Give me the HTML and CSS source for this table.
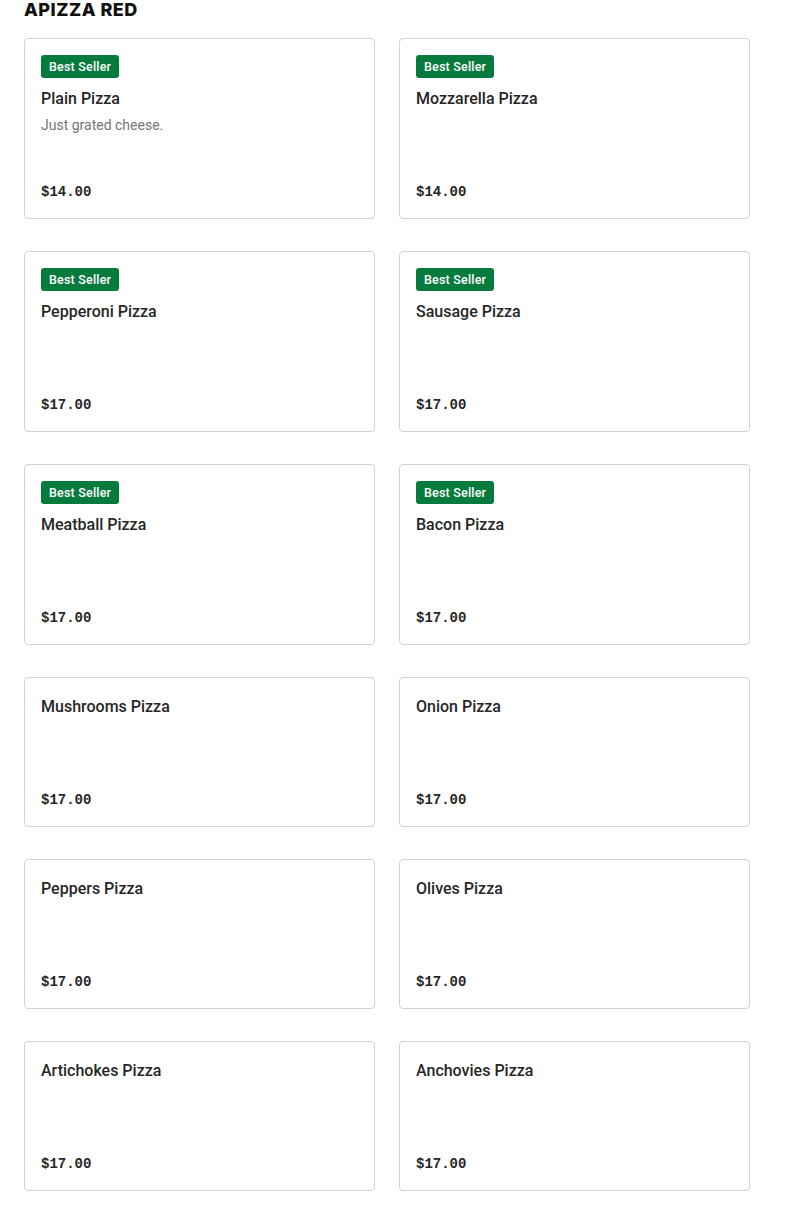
FILE: index.html
```html
<!DOCTYPE html>
<html>
<head>
<meta charset="utf-8">
<link rel="stylesheet" href="styles.css">
</head>
<body>
<main class="menu">
  <h2 class="section-title">APIZZA RED</h2>
  <div class="grid">
    <div class="card">
      <span class="badge">Best Seller</span>
      <div class="info">
        <div class="name">Plain Pizza</div>
        <div class="desc">Just grated cheese.</div>
      </div>
      <div class="price">$14.00</div>
    </div>
    <div class="card">
      <span class="badge">Best Seller</span>
      <div class="info"><div class="name">Mozzarella Pizza</div></div>
      <div class="price">$14.00</div>
    </div>
    <div class="card">
      <span class="badge">Best Seller</span>
      <div class="info"><div class="name">Pepperoni Pizza</div></div>
      <div class="price">$17.00</div>
    </div>
    <div class="card">
      <span class="badge">Best Seller</span>
      <div class="info"><div class="name">Sausage Pizza</div></div>
      <div class="price">$17.00</div>
    </div>
    <div class="card">
      <span class="badge">Best Seller</span>
      <div class="info"><div class="name">Meatball Pizza</div></div>
      <div class="price">$17.00</div>
    </div>
    <div class="card">
      <span class="badge">Best Seller</span>
      <div class="info"><div class="name">Bacon Pizza</div></div>
      <div class="price">$17.00</div>
    </div>
    <div class="card">
      <div class="info"><div class="name">Mushrooms Pizza</div></div>
      <div class="price">$17.00</div>
    </div>
    <div class="card">
      <div class="info"><div class="name">Onion Pizza</div></div>
      <div class="price">$17.00</div>
    </div>
    <div class="card">
      <div class="info"><div class="name">Peppers Pizza</div></div>
      <div class="price">$17.00</div>
    </div>
    <div class="card">
      <div class="info"><div class="name">Olives Pizza</div></div>
      <div class="price">$17.00</div>
    </div>
    <div class="card">
      <div class="info"><div class="name">Artichokes Pizza</div></div>
      <div class="price">$17.00</div>
    </div>
    <div class="card">
      <div class="info"><div class="name">Anchovies Pizza</div></div>
      <div class="price">$17.00</div>
    </div>
  </div>
</main>
</body>
</html>
```
FILE: styles.css
```css
html, body {
  margin: 0;
  padding: 0;
  background: #ffffff;
}
body {
  font-family: "Roboto", "Liberation Sans", sans-serif;
  color: #2b2b2b;
}
.menu {
  padding: 0 35px 0 24px;
}
.section-title {
  margin: 0 0 18px 0;
  font-family: "Inter", "Liberation Sans", sans-serif;
  font-size: 18px;
  line-height: 20px;
  font-weight: 800;
  color: #111111;
  letter-spacing: 0.5px;
}
.grid {
  display: grid;
  grid-template-columns: 351px 351px;
  column-gap: 24px;
  row-gap: 32px;
}
.card {
  border: 1px solid #d2d2d2;
  border-radius: 4px;
  padding: 16px;
  display: flex;
  flex-direction: column;
  align-items: flex-start;
  background: #fff;
}
.badge {
  display: inline-block;
  background: #077a3d;
  color: #ffffff;
  font-size: 12.5px;
  font-weight: 500;
  line-height: 23px;
  height: 23px;
  padding: 0 8px;
  border-radius: 3px;
  margin-bottom: 8px;
  letter-spacing: 0.2px;
}
.info {
  min-height: 96px;
}
.name {
  font-size: 16px;
  line-height: 26px;
  font-weight: 500;
  color: #262626;
}
.desc {
  margin-top: 3px;
  font-size: 14px;
  line-height: 20px;
  color: #767676;
}
.price {
  font-family: "Liberation Mono", "DejaVu Sans Mono", monospace;
  font-weight: 700;
  font-size: 14px;
  line-height: 20px;
  color: #262626;
}
```
